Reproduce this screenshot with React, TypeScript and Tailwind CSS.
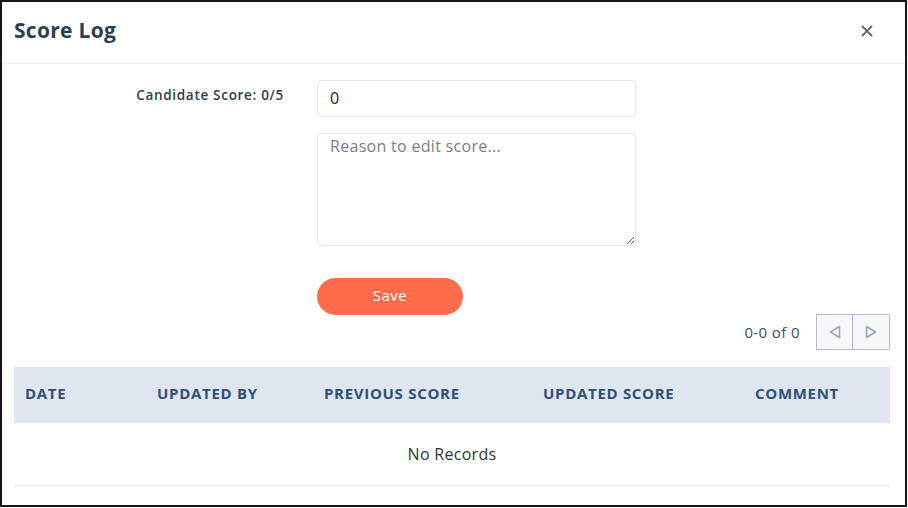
import React from "react";

const cols = [
  { label: "DATE", w: "w-[132px]" },
  { label: "UPDATED BY", w: "w-[167px]" },
  { label: "PREVIOUS SCORE", w: "w-[219px]" },
  { label: "UPDATED SCORE", w: "w-[212px]" },
  { label: "COMMENT", w: "w-[146px]" },
];

function Tri({ dir }: { dir: "left" | "right" }) {
  return (
    <svg width="12" height="14" viewBox="0 0 12 14" fill="none" stroke="#9aa7b6" strokeWidth="1.6" strokeLinejoin="round">
      {dir === "left" ? <path d="M10.5 1.5 L1.5 7 L10.5 12.5 Z" /> : <path d="M1.5 1.5 L10.5 7 L1.5 12.5 Z" />}
    </svg>
  );
}

export default function App() {
  return (
    <div className="w-[908px] h-[508px] bg-white" style={{ fontFamily: '"Open Sans", "Noto Sans", sans-serif' }}>
      <div className="w-[907px] h-[507px] border-2 border-[#151515] bg-white flex flex-col overflow-hidden">
        {/* header */}
        <div className="h-[62px] flex items-center justify-between border-b border-[#ececec] pl-[12px] pr-[32px] pb-[4px] shrink-0">
          <h1 className="text-[21px] font-bold text-[#2c3e50] tracking-[0.3px]">Score Log</h1>
          <svg width="12" height="12" viewBox="0 0 12 12" stroke="#6b6b6b" strokeWidth="2" strokeLinecap="round">
            <path d="M1.5 1.5 L10.5 10.5 M10.5 1.5 L1.5 10.5" />
          </svg>
        </div>

        <div className="px-[12px] flex flex-col">
          {/* form */}
          <div className="flex pt-[16px]">
            <div className="w-[303px] shrink-0 pr-[33px] text-right pt-[2px]">
              <span className="text-[13.5px] font-semibold text-[#2c3e50] tracking-[0.7px]">Candidate Score: 0/5</span>
            </div>
            <div className="flex flex-col w-[319px]">
              <input
                defaultValue="0"
                className="h-[37px] border border-[#e4e6ea] rounded-[4px] px-[12px] pb-[2px] text-[16px] text-[#222] outline-none"
              />
              <textarea
                placeholder="Reason to edit score..."
                className="mt-[16px] h-[113px] border border-[#e4e6ea] rounded-[4px] px-[12px] pt-0 pb-[4px] text-[16px] text-[#222] placeholder:text-[#79808a] outline-none tracking-[0.3px]"
              />
              <button className="mt-[32px] w-[146px] h-[37px] pb-[2px] rounded-full bg-[#ff6c4b] text-white text-[15px] font-medium tracking-[0.5px]">
                Save
              </button>
            </div>
          </div>

          {/* pagination */}
          <div className="flex items-center justify-end -mt-[1px] pr-[3px]">
            <span className="text-[15px] text-[#3b4f6b] mr-[16px] tracking-[0.4px]">0-0 of 0</span>
            <div className="flex border border-[#b3bfcc] bg-[#f6f7f9]">
              <div className="w-[36px] h-[34px] flex items-center justify-center border-r border-[#b3bfcc]">
                <Tri dir="left" />
              </div>
              <div className="w-[36px] h-[34px] flex items-center justify-center">
                <Tri dir="right" />
              </div>
            </div>
          </div>

          {/* table */}
          <div className="mt-[17px] w-[876px]">
            <div className="flex h-[56px] items-center bg-[#dfe6f0] pb-[3px]">
              {cols.map((c) => (
                <div key={c.label} className={`${c.w} pl-[11px] text-[15px] font-bold text-[#2e5079] tracking-[0.7px]`}>
                  {c.label}
                </div>
              ))}
            </div>
            <div className="h-[63px] flex items-center justify-center border-b border-[#e2e2e2] text-[16px] text-[#333] tracking-[0.3px]">
              No Records
            </div>
          </div>
        </div>
      </div>
    </div>
  );
}
